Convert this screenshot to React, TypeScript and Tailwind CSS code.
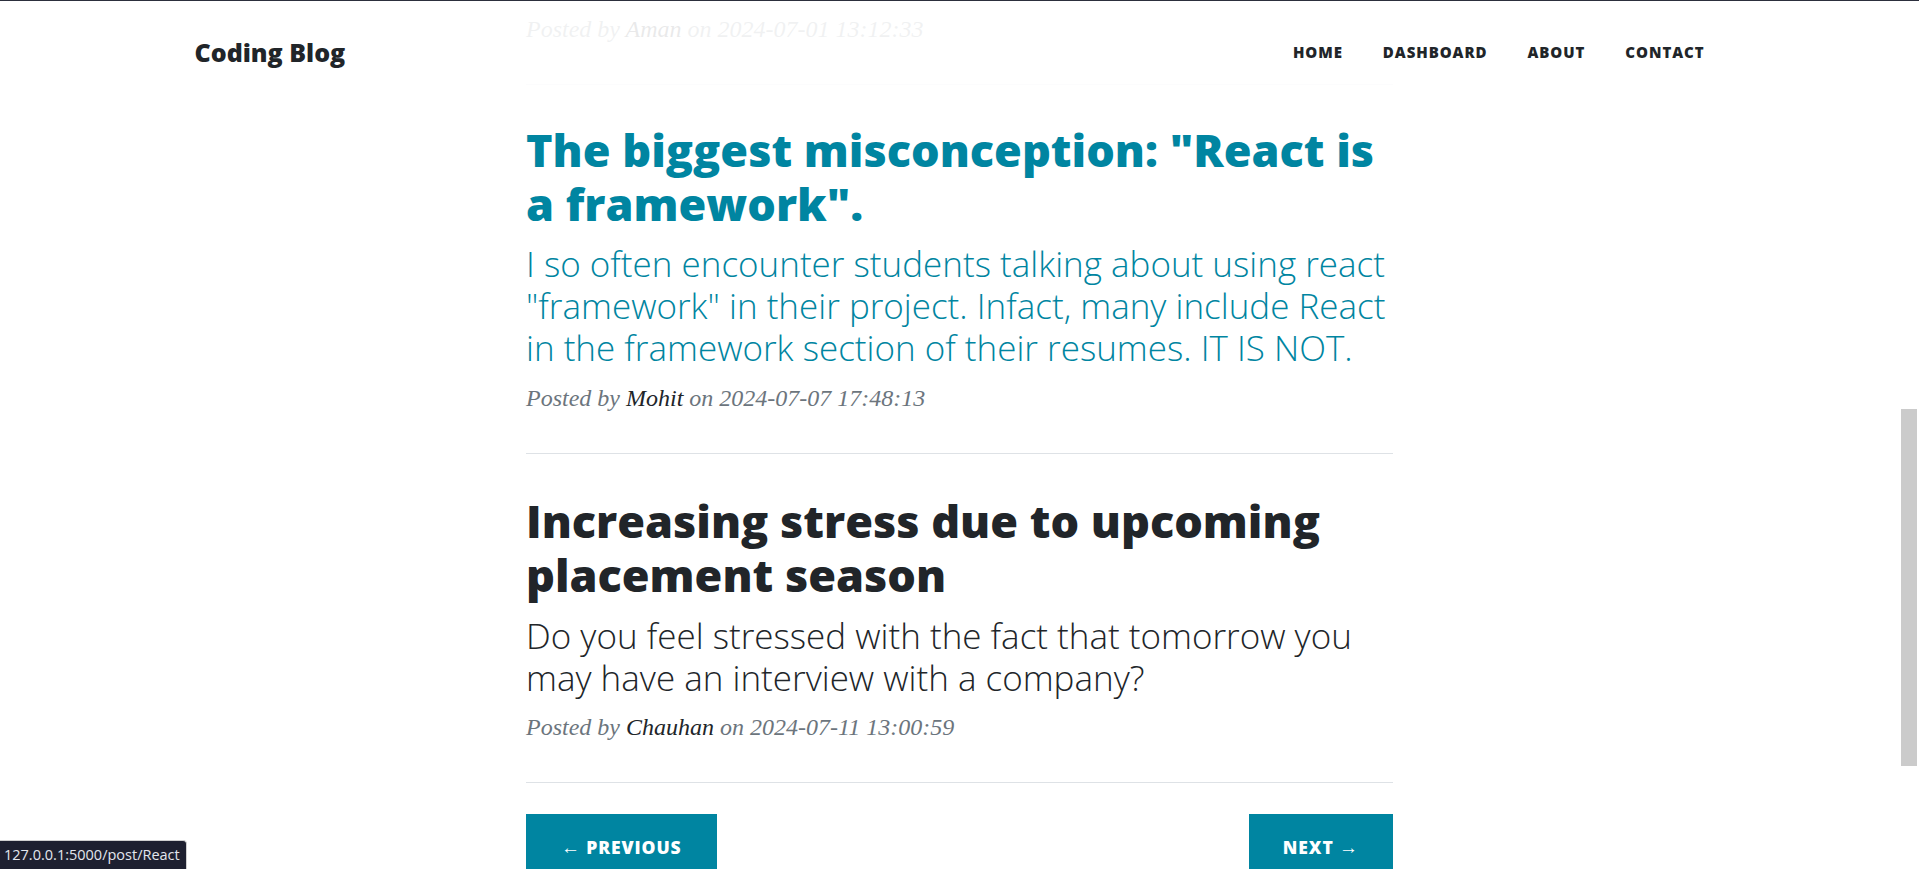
import React from 'react'

interface Post {
  title: string
  subtitle: string
  author: string
  date: string
  hovered?: boolean
}

const posts: Post[] = [
  {
    title: 'The biggest misconception: "React is a framework".',
    subtitle:
      'I so often encounter students talking about using react "framework" in their project. Infact, many include React in the framework section of their resumes. IT IS NOT.',
    author: 'Mohit',
    date: '2024-07-07 17:48:13',
    hovered: true,
  },
  {
    title: 'Increasing stress due to upcoming placement season',
    subtitle: 'Do you feel stressed with the fact that tomorrow you may have an interview with a company?',
    author: 'Chauhan',
    date: '2024-07-11 13:00:59',
  },
]

const Meta = ({ author, date }: { author: string; date: string }) => (
  <p className="mb-[37.5px] text-[24px] italic leading-[33.75px] text-[#6c757d]">
    Posted by <a className="text-[#212529]">{author}</a> on {date}
  </p>
)

const Divider = ({ extra }: { extra?: boolean }) => (
  <hr className={extra ? 'mb-[2.5px] h-0 border-0 border-t border-[#dee2e6]' : 'h-0 border-0 border-t border-[#dee2e6]'} />
)

const PostPreview = ({ post }: { post: Post }) => (
  <div className="flex flex-col">
    <a className={post.hovered ? 'text-[#0085a1]' : 'text-[#212529]'}>
      <h2 className="mt-[37.5px] mb-[12.5px] font-['Open_Sans',sans-serif] text-[45px] font-extrabold leading-[54px]">
        {post.title}
      </h2>
      <h3 className="mb-[12.5px] font-['Open_Sans',sans-serif] text-[35px] font-light leading-[42px]">
        {post.subtitle}
      </h3>
    </a>
    <Meta author={post.author} date={post.date} />
  </div>
)

export default function App() {
  return (
    <div className="relative h-[869px] w-full overflow-hidden bg-white font-['Liberation_Serif',serif] text-[#212529]">
      <main className="mx-auto flex w-[867px] flex-col pt-[13px]">
        {/* previous post, mostly hidden under the navbar */}
        <Meta author="Aman" date="2024-07-01 13:12:33" />
        <Divider />
        {posts.map((post, i) => (
          <React.Fragment key={post.title}>
            <PostPreview post={post} />
            <Divider extra={i === 0} />
          </React.Fragment>
        ))}
        <div className="mt-[31px] flex justify-between font-['Open_Sans',sans-serif] text-[17.5px] font-extrabold uppercase leading-[26px] tracking-[0.9px] text-white">
          <a className="bg-[#0085a1] px-[35px] py-[20px]">
            <span className="text-[19px] font-normal">←</span> Previous
          </a>
          <a className="bg-[#0085a1] px-[34px] py-[20px]">
            Next <span className="text-[19px] font-normal">→</span>
          </a>
        </div>
      </main>

      {/* fixed navbar */}
      <nav className="absolute inset-x-0 top-0 h-[105px] bg-white/90">
        <div className="mx-auto flex h-full w-[1650px] items-center justify-between px-[60px] font-['Open_Sans',sans-serif] text-[#212529]">
          <a className="text-[25px] font-extrabold">Coding Blog</a>
          <ul className="flex text-[15px] font-extrabold uppercase tracking-[0.94px]">
            {['Home', 'Dashboard', 'About', 'Contact'].map((item) => (
              <li key={item} className="px-[20px]">
                {item}
              </li>
            ))}
          </ul>
        </div>
      </nav>

      <div className="absolute inset-x-0 top-0 h-px bg-[#2c2f3d]" />

      {/* overlay scrollbar thumb */}
      <div className="absolute top-[409px] right-[2px] h-[357px] w-[16px] bg-[#cbcbcb]" />

      {/* link status bubble */}
      <div className="absolute bottom-0 left-0 flex h-[29px] w-[187px] items-center rounded-tr-[4px] border-t border-r border-[#d0d0d0] bg-[#1e2030] pl-[4px] font-['Open_Sans',sans-serif] text-[14.5px] text-[#e3e6ee]">
        127.0.0.1:5000/post/React
      </div>
    </div>
  )
}
